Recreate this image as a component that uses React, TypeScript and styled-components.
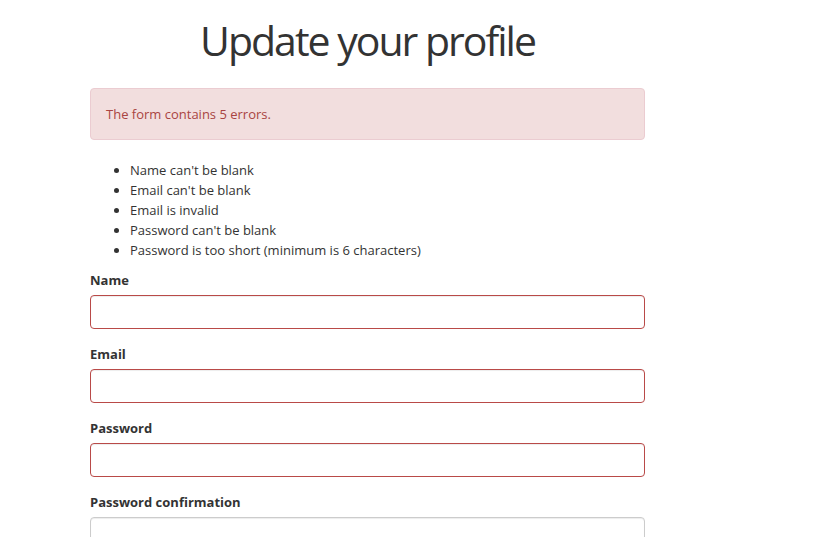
import React from "react";
import styled, { createGlobalStyle } from "styled-components";

const GlobalStyle = createGlobalStyle`
  body {
    margin: 0;
    background: #fff;
    font-family: "Open Sans", "Noto Sans", sans-serif;
    font-size: 13px;
    line-height: 20px;
    color: #333;
  }
  * { box-sizing: border-box; }
`;

const Container = styled.div`
  width: 555px;
  margin-left: 90px;
`;

const Title = styled.h1`
  margin: 14px 0 22px;
  font-size: 41px;
  line-height: 52px;
  font-weight: 400;
  letter-spacing: -2px;
  text-align: center;
  color: #333;
`;

const Alert = styled.div`
  padding: 15px;
  margin-bottom: 20px;
  border: 1px solid #ebccd1;
  border-radius: 4px;
  background: #f2dede;
  color: #a94442;
`;

const ErrorList = styled.ul`
  margin: 0 0 10px;
  padding-left: 40px;
`;

const Label = styled.label`
  display: block;
  margin-bottom: 5px;
  font-weight: 700;
`;

const Input = styled.input<{ $invalid?: boolean }>`
  display: block;
  width: 100%;
  height: 34px;
  margin-bottom: 15px;
  padding: 6px 12px;
  font: inherit;
  border: 1px solid ${(p) => (p.$invalid ? "#b94a48" : "#ccc")};
  border-radius: 4px;
  box-shadow: inset 0 1px 1px rgba(0, 0, 0, 0.075);
  outline: none;
`;

const errors = [
  "Name can't be blank",
  "Email can't be blank",
  "Email is invalid",
  "Password can't be blank",
  "Password is too short (minimum is 6 characters)",
];

const fields = [
  { label: "Name", type: "text", invalid: true },
  { label: "Email", type: "email", invalid: true },
  { label: "Password", type: "password", invalid: true },
  { label: "Password confirmation", type: "password", invalid: false },
];

const App = () => {
  return (
    <>
      <GlobalStyle />
      <Container>
        <Title>Update your profile</Title>
        <Alert>The form contains {errors.length} errors.</Alert>
        <ErrorList>
          {errors.map((e) => (
            <li key={e}>{e}</li>
          ))}
        </ErrorList>
        {fields.map((f) => (
          <div key={f.label}>
            <Label>{f.label}</Label>
            <Input type={f.type} $invalid={f.invalid} />
          </div>
        ))}
      </Container>
    </>
  );
};

export default App;
